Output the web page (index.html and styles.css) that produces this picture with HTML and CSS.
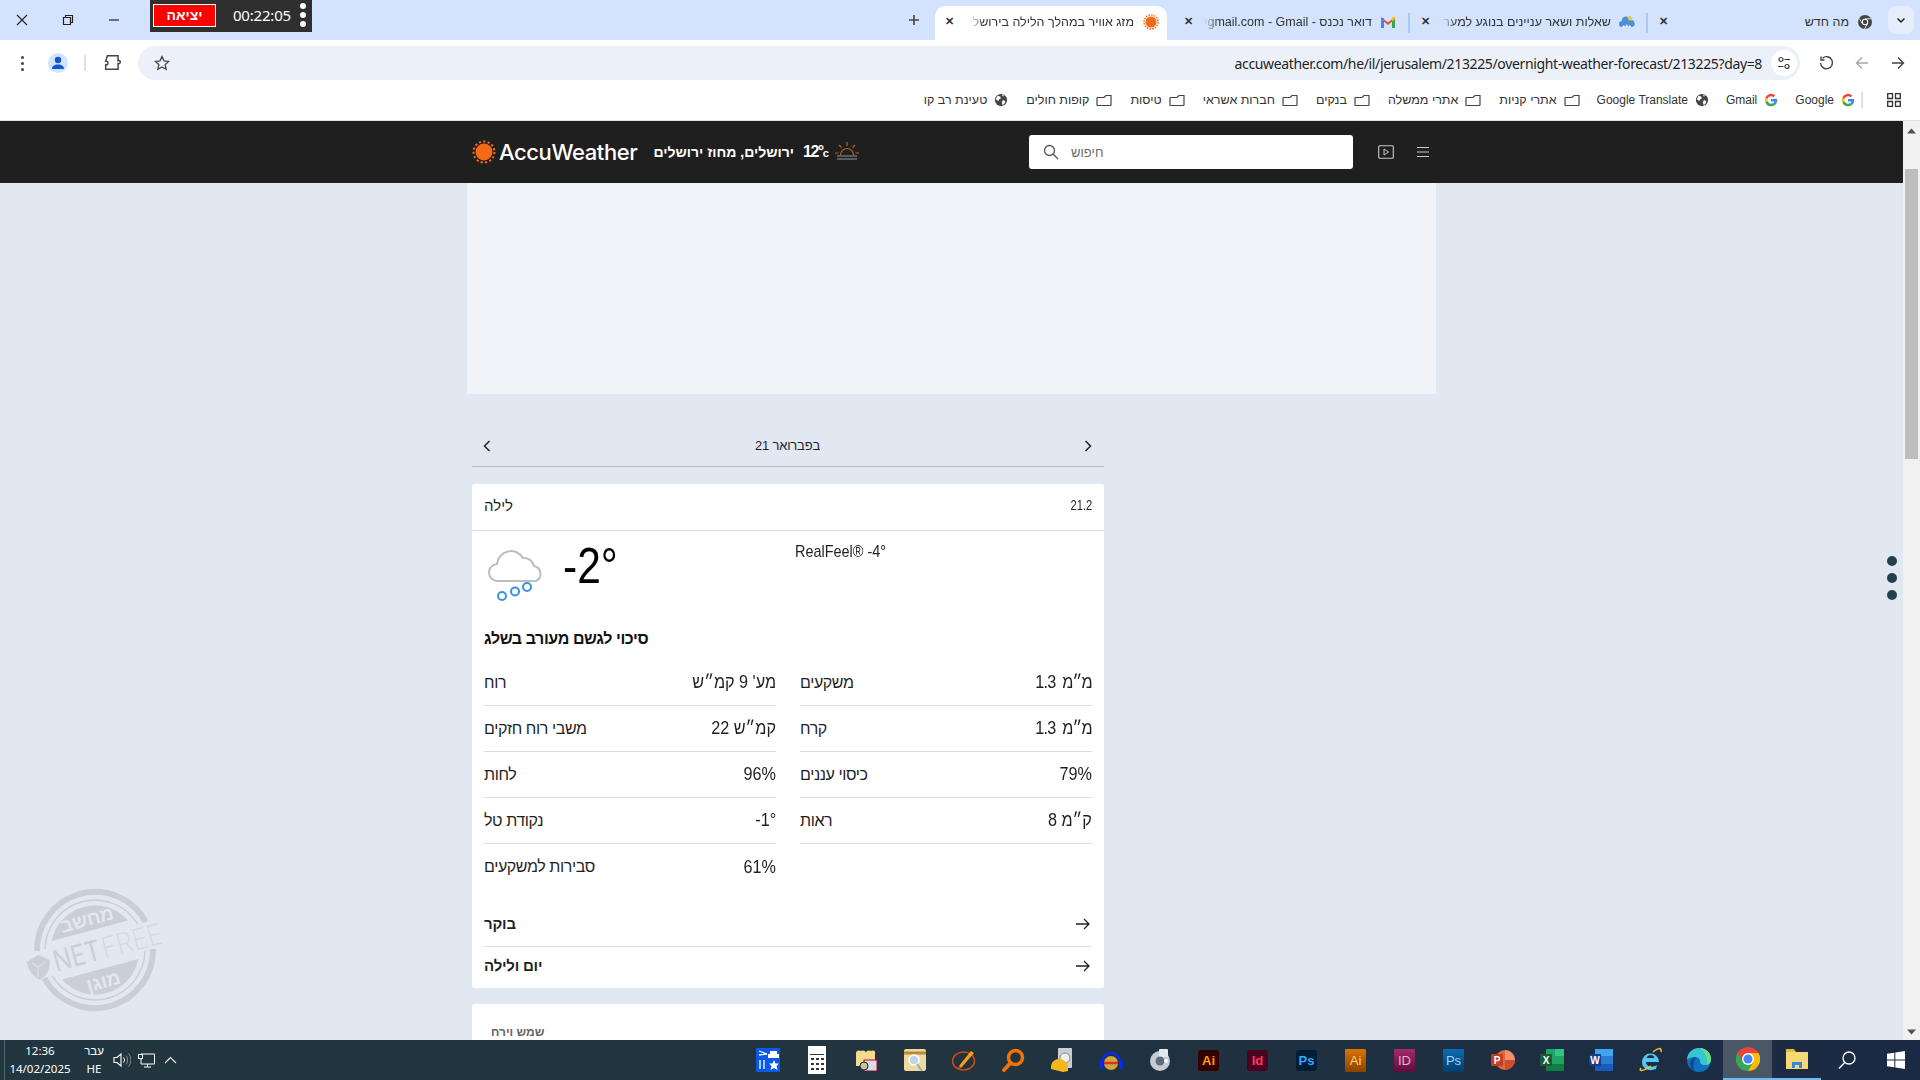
FILE: index.html
```html
<!DOCTYPE html>
<html lang="he">
<head>
<meta charset="utf-8">
<title>מזג אוויר במהלך הלילה בירושלים</title>
<link rel="stylesheet" href="styles.css">
</head>
<body>
<svg class="defs" width="0" height="0" aria-hidden="true">
  <symbol id="folder" viewBox="0 0 16 14"><path d="M1 2.500h5l2 2h6.500c.3 0 .5.2.5.5v7c0 .3-.2.5-.5.5h-13c-.3 0-.5-.2-.5-.5z" transform="matrix(-1 0 0 1 16 0)" fill="none" stroke="#444" stroke-width="1.200"/></symbol>
  <symbol id="globe" viewBox="0 0 16 16"><circle cx="8" cy="8" r="7" fill="#444"/><path d="M4 3l3 1 1 2-2 1-1 2-3-2zM10 8l3 1-1 3-2 2-1-3zM9 2l3 1-2 1z" fill="#fff"/></symbol>
  <symbol id="gg" viewBox="0 0 16 16"><path d="M15 8.200c0-.5 0-1-.1-1.400H8v2.800h4a3.400 3.400 0 0 1-1.500 2.200l2.300 1.800C14.200 12.300 15 10.400 15 8.200z" fill="#4285f4"/><path d="M8 15c1.900 0 3.500-.6 4.800-1.700l-2.300-1.800c-.6.400-1.500.7-2.500.7-1.900 0-3.500-1.300-4-3L1.600 11A7 7 0 0 0 8 15z" fill="#34a853"/><path d="M4 9.200a4.200 4.200 0 0 1 0-2.400L1.600 5a7 7 0 0 0 0 6.300z" fill="#fbbc05"/><path d="M8 3.800c1.100 0 2 .4 2.800 1.100l2-2A7 7 0 0 0 1.600 5L4 6.800c.5-1.700 2.100-3 4-3z" fill="#ea4335"/></symbol>
</svg>

<div class="tabstrip">
  <div class="wincontrols">
    <svg class="winbtn" width="12" height="12" viewBox="0 0 12 12"><path d="M1 1l10 10M11 1L1 11" stroke="#222" stroke-width="1.100"/></svg>
    <svg class="winbtn" width="12" height="12" viewBox="0 0 12 12"><path d="M1.500 3.500h7v7h-7zM3.500 3.500v-2h7v7h-2" fill="none" stroke="#222" stroke-width="1.200"/></svg>
    <svg class="winbtn" width="12" height="12" viewBox="0 0 12 12"><path d="M1 6h10" stroke="#222" stroke-width="1.200"/></svg>
  </div>
  <div class="timer">
    <span class="exit">יציאה</span>
    <span class="clock">00:22:05</span>
    <span class="timerdots"><i></i><i></i><i></i></span>
  </div>
  <div class="tabs">
    <svg class="newtab" width="12" height="12" viewBox="0 0 12 12"><path d="M6 1v10M1 6h10" stroke="#444" stroke-width="1.600"/></svg>
    <div class="tab active">
      <span class="x">✕</span>
      <span class="title">מזג אוויר במהלך הלילה בירושלים</span>
      <svg width="16" height="16" viewBox="0 0 16 16"><circle cx="8" cy="8" r="5.500" fill="#f56a15"/><circle cx="8" cy="8" r="7" fill="none" stroke="#f56a15" stroke-width="1.600" stroke-dasharray="1.500 1.250"/></svg>
    </div>
    <div class="tab gmail">
      <span class="x">✕</span>
      <span class="title">דואר נכנס - Gmail &rlm;- &rlm;user@gmail.com</span>
      <svg width="16" height="14" viewBox="0 0 16 14"><path d="M1 13V2l7 5.500L15 2v11h-3V6.500L8 10 4 6.500V13z" fill="#ea4335"/><path d="M1 13V3h3v10z" fill="#4285f4"/><path d="M12 13V3h3v10z" fill="#34a853"/><path d="M12 3l3-1.500V4l-3 2.500z" fill="#fbbc05"/></svg>
    </div>
    <i class="tabsep"></i>
    <div class="tab questions">
      <span class="x">✕</span>
      <span class="title">שאלות ושאר עניינים בנוגע למערכת</span>
      <svg width="16" height="14" viewBox="0 0 16 14"><path d="M3 12a3 3 0 0 1 0-6 4 4 0 0 1 8-1 3.500 3.500 0 0 1 2 7z" fill="#4a90d9"/><path d="M3 12l2-2 1 2 2-3 1 3 2-2 1 2z" fill="#fff"/><path d="M11 0l1 2 2 .5-1.500 1.500.3 2-1.800-1-1.800 1 .3-2L8 2.500 10 2z" fill="#f4c542"/></svg>
    </div>
    <i class="tabsep"></i>
    <div class="tab whatsnew">
      <span class="x">✕</span>
      <span class="title">מה חדש</span>
      <svg width="16" height="16" viewBox="0 0 16 16"><circle cx="8" cy="8" r="7" fill="#444"/><circle cx="8" cy="8" r="3.200" fill="#fff"/><circle cx="8" cy="8" r="2.200" fill="#444"/><path d="M8 4.800h6M5.300 9.500L2.300 4.500M10.700 9.500L7.500 15" stroke="#fff" stroke-width=".8"/></svg>
    </div>
    <div class="tabmenu"><svg width="10" height="10" viewBox="0 0 10 10"><path d="M1.500 3.500L5 7l3.500-3.500" fill="none" stroke="#222" stroke-width="1.500"/></svg></div>
  </div>
</div>

<div class="toolbar">
  <div class="toolleft">
    <span class="kebab"><i></i><i></i><i></i></span>
    <span class="avatar"><svg width="14" height="14" viewBox="0 0 14 14"><circle cx="7" cy="4" r="3.200" fill="#0b57d0"/><path d="M1 13c0-3 2.500-4.500 6-4.500s6 1.500 6 4.500z" fill="#0b57d0"/></svg></span>
    <i class="vsep"></i>
    <svg class="puzzle" width="18" height="18" viewBox="0 0 16 16"><path d="M3 1.500h9.500v4.500c1.500-.5 2 .5 2 1.200s-.5 1.800-2 1.300v5H1.500v-4c1.500.5 2-.5 2-1.500S3 6 1.500 6.500z" fill="none" stroke="#444" stroke-width="1.300"/></svg>
  </div>
  <div class="omnibox">
    <svg class="star" width="16" height="16" viewBox="0 0 16 16"><path d="M8 1.500l2 4.300 4.700.6-3.500 3.200.9 4.700L8 12l-4.100 2.300.9-4.700L1.300 6.400 6 5.800z" fill="none" stroke="#444" stroke-width="1.300"/></svg>
    <span class="url">accuweather.com/he/il/jerusalem/213225/overnight-weather-forecast/213225?day=8</span>
    <span class="tune"><svg width="14" height="14" viewBox="0 0 14 14"><circle cx="4" cy="3.500" r="2" fill="none" stroke="#333" stroke-width="1.200"/><path d="M7.500 3.500H13M1 10.500h5.500" stroke="#333" stroke-width="1.200"/><circle cx="10" cy="10.500" r="2" fill="none" stroke="#333" stroke-width="1.200"/></svg></span>
  </div>
  <div class="nav">
    <svg width="16" height="16" viewBox="0 0 16 16"><path d="M4.500 3.200A6 6 0 1 1 2.500 8" fill="none" stroke="#444" stroke-width="1.400"/><path d="M3 1.500V5h3.500" fill="none" stroke="#444" stroke-width="1.400"/></svg>
    <svg width="16" height="16" viewBox="0 0 16 16"><path d="M14 8H2.500M8 2.500L2.500 8 8 13.500" fill="none" stroke="#a6a8ab" stroke-width="1.400"/></svg>
    <svg width="16" height="16" viewBox="0 0 16 16"><path d="M2 8h11.500M8 2.500L13.500 8 8 13.500" fill="none" stroke="#444" stroke-width="1.400"/></svg>
  </div>
</div>

<div class="bookmarks">
  <svg class="apps" width="14" height="14" viewBox="0 0 14 14"><path d="M.7.700h4.800v4.800H.7zM8.500.700h4.800v4.800H8.500zM.7 8.500h4.800v4.800H.7zM8.500 8.500h4.800v4.800H8.500z" fill="none" stroke="#333" stroke-width="1.300"/></svg>
  <i class="vsep bmsep"></i>
  <span class="bm"><svg width="14" height="14"><use href="#gg"/></svg>Google</span>
  <span class="bm"><svg width="14" height="14"><use href="#gg"/></svg>Gmail</span>
  <span class="bm"><svg width="14" height="14"><use href="#globe"/></svg>Google Translate</span>
  <span class="bm he"><svg width="16" height="14"><use href="#folder"/></svg>אתרי קניות</span>
  <span class="bm he"><svg width="16" height="14"><use href="#folder"/></svg>אתרי ממשלה</span>
  <span class="bm he"><svg width="16" height="14"><use href="#folder"/></svg>בנקים</span>
  <span class="bm he"><svg width="16" height="14"><use href="#folder"/></svg>חברות אשראי</span>
  <span class="bm he"><svg width="16" height="14"><use href="#folder"/></svg>טיסות</span>
  <span class="bm he"><svg width="16" height="14"><use href="#folder"/></svg>קופות חולים</span>
  <span class="bm he"><svg width="14" height="14"><use href="#globe"/></svg>טעינת רב קו</span>
</div>

<div class="viewport">
  <div class="page">
    <header class="sitehead">
      <div class="headinner">
        <svg class="logosun" width="24" height="24" viewBox="0 0 24 24"><circle cx="12" cy="12" r="8.500" fill="#f56a15"/><circle cx="12" cy="12" r="10.500" fill="none" stroke="#f56a15" stroke-width="2" stroke-dasharray="2.200 2.200"/></svg>
        <span class="brand">AccuWeather</span>
        <span class="city">ירושלים, מחוז ירושלים</span>
        <span class="headtemp">12°<small>c</small></span>
        <svg class="headicon" width="24" height="22" viewBox="0 0 24 22"><path d="M5.500 14a6.500 6.500 0 0 1 13 0" fill="none" stroke="#b8651b" stroke-width="1.200"/><path d="M12 1v4M4 4l2.500 2.500M20 4l-2.500 2.500M0 12h3.500M20.500 12H24" stroke="#b8651b" stroke-width="1.200"/><path d="M2 15h20M2 18h20" stroke="#999" stroke-width="1.200"/></svg>
        <div class="headright">
          <div class="search">
            <svg width="16" height="16" viewBox="0 0 16 16"><circle cx="6.500" cy="6.500" r="5" fill="none" stroke="#555" stroke-width="1.300"/><path d="M10.300 10.300L15 15" stroke="#555" stroke-width="1.300"/></svg>
            <span>חיפוש</span>
          </div>
          <svg class="play" width="16" height="16" viewBox="0 0 16 16"><rect x=".7" y="1.700" width="14.600" height="12.600" rx="1" fill="none" stroke="#ccc" stroke-width="1.100"/><path d="M6 5l4.500 3L6 11z" fill="none" stroke="#ccc"/></svg>
          <svg class="menu" width="14" height="12" viewBox="0 0 14 12"><path d="M1 1.500h12M1 6h12M1 10.500h12" stroke="#ccc" stroke-width="1.100"/></svg>
        </div>
      </div>
    </header>

    <div class="content">
      <div class="adslot"></div>
      <div class="column">
        <div class="datebar">
          <svg width="8" height="12" viewBox="0 0 8 12"><path d="M6.500 1L1.500 6l5 5" fill="none" stroke="#222" stroke-width="1.500"/></svg>
          <span>21 בפברואר</span>
          <svg width="8" height="12" viewBox="0 0 8 12"><path d="M1.500 1l5 5-5 5" fill="none" stroke="#222" stroke-width="1.500"/></svg>
        </div>

        <section class="card">
          <div class="cardhead"><span class="night">לילה</span><span class="shortdate">21.2</span></div>
          <div class="current">
            <svg class="wxicon" width="56" height="54" viewBox="0 0 56 54"><path d="M10 33a8.500 8.500 0 0 1-1-17 14 14 0 0 1 26-6 10 10 0 0 1 11 8 8 8 0 0 1 2 15 4 4 0 0 1-2 0z" fill="none" stroke="#bdbdbd" stroke-width="2"/><circle cx="14" cy="48" r="4" fill="none" stroke="#3a92de" stroke-width="2"/><circle cx="27" cy="43.500" r="4" fill="none" stroke="#3a92de" stroke-width="2"/><circle cx="39" cy="39" r="4" fill="none" stroke="#3a92de" stroke-width="2"/></svg>
            <span class="bigtemp">-2°</span>
            <span class="realfeel">RealFeel® -4°</span>
          </div>
          <div class="phrase">סיכוי לגשם מעורב בשלג</div>
          <div class="stats">
            <div class="stat"><span>רוח</span><b>מע' 9 קמ״ש</b></div>
            <div class="stat"><span>משקעים</span><b class="tight">1.3 מ״מ</b></div>
            <div class="stat"><span>משבי רוח חזקים</span><b>22 קמ״ש</b></div>
            <div class="stat"><span>קרח</span><b class="tight">1.3 מ״מ</b></div>
            <div class="stat"><span>לחות</span><b>96%</b></div>
            <div class="stat"><span>כיסוי עננים</span><b>79%</b></div>
            <div class="stat"><span>נקודת טל</span><b>-1°</b></div>
            <div class="stat"><span>ראות</span><b>8 ק״מ</b></div>
            <div class="stat last"><span>סבירות למשקעים</span><b>61%</b></div>
          </div>
          <div class="links">
            <div class="link"><strong>בוקר</strong><svg width="16" height="12" viewBox="0 0 16 12"><path d="M1 6h13M9 1l5 5-5 5" fill="none" stroke="#222" stroke-width="1.300"/></svg></div>
            <div class="link"><strong>יום ולילה</strong><svg width="16" height="12" viewBox="0 0 16 12"><path d="M1 6h13M9 1l5 5-5 5" fill="none" stroke="#222" stroke-width="1.300"/></svg></div>
          </div>
        </section>

        <section class="card suncard"><span>שמש וירח</span></section>
      </div>
    </div>

    <div class="sidedots"><i></i><i></i><i></i></div>

    <div class="watermark">
      <svg width="160" height="140" viewBox="0 0 160 140">
        <g transform="translate(75 70) rotate(-15)">
          <path d="M-56.300 -14A58 58 0 0 1 56.300 -14M56.300 14A58 58 0 0 1 -56.300 14" fill="none" stroke="#cbced7" stroke-width="6"/>
          <path d="M-48 -14A50 50 0 0 1 48 -14M48 14A50 50 0 0 1 -48 14" fill="none" stroke="#cbced7" stroke-width="1.500"/>
          <path d="M-39.500 -20A44 44 0 0 1 39.500 -20zM39.500 20A44 44 0 0 1 -39.500 20z" fill="#cbced7"/>
          <text x="0" y="-25" class="wmheb" text-anchor="middle">מחשב</text>
          <text x="0" y="39" class="wmheb" text-anchor="middle">מוגן</text>
          <text x="-43" y="11" class="wmnet" textLength="48" lengthAdjust="spacingAndGlyphs">NET</text>
          <text x="7" y="11" class="wmfree" textLength="62" lengthAdjust="spacingAndGlyphs">FREE</text>
        </g>
        <path d="M7 82l11-7 12 5c0 9-3 16-10 20-6-3-12-9-13-18z" fill="#cbced7"/>
        <path d="M12 83l6 4 7-5M18 87v10" fill="none" stroke="#e2e8f1"/>
      </svg>
    </div>
  </div>
  <div class="scrollbar">
    <svg class="arrow" width="9" height="6" viewBox="0 0 9 6"><path d="M0 5.500L4.500.5 9 5.500z" fill="#505050"/></svg>
    <div class="thumb"></div>
    <svg class="arrow down" width="9" height="6" viewBox="0 0 9 6"><path d="M0 .5L4.500 5.500 9 .5z" fill="#505050"/></svg>
  </div>
</div>

<footer class="taskbar">
  <i class="showdesk"></i>
  <div class="dateclock"><span>12:36</span><span>14/02/2025</span></div>
  <div class="lang"><span>עבר</span><span>HE</span></div>
  <div class="tray">
    <svg width="18" height="16" viewBox="0 0 18 16"><path d="M1 5.500h3l4-3.500v12l-4-3.500H1z" fill="none" stroke="#fff" stroke-width="1.100"/><path d="M10.500 5.500a3.500 3.500 0 0 1 0 5" fill="none" stroke="#fff"/><path d="M13 3.500a7 7 0 0 1 0 9M15.500 1.500a10 10 0 0 1 0 13" fill="none" stroke="#7f8b94"/></svg>
    <svg width="17" height="15" viewBox="0 0 17 15"><path d="M3 1h13.500v10H3zM9.500 11v3M6 14h7" fill="none" stroke="#fff"/><rect x=".5" y="1.500" width="4" height="4" fill="#22343f" stroke="#fff"/></svg>
    <svg class="caret" width="13" height="8" viewBox="0 0 13 8"><path d="M1 7l5.500-5.500L12 7" fill="none" stroke="#fff" stroke-width="1.100"/></svg>
  </div>
  <div class="apps-row">
    <span class="slot"><svg width="24" height="24" viewBox="0 0 24 24"><rect width="24" height="24" fill="#0a5ae8"/><path d="M3 3l8 3M3 7l8-1M4 12v9M8 12v9" stroke="#fff" stroke-width="1.300"/><path d="M14 3h7v3h2v4h-11V6h2z" fill="#fff"/><path d="M18 12l1.500 3.500h3.500L20.500 18l1 4-3.500-2-3.500 2 1-4-2.500-2.500h3.500z" fill="#fff"/></svg></span>
    <span class="slot"><svg width="18" height="28" viewBox="0 0 18 28"><rect width="18" height="28" fill="#fff"/><path d="M2 8h14v1H2z" fill="#2a3a44"/><path d="M3 12h3v2H3zM8 12h3v2H8zM13 12h3v2h-3zM3 17h3v2H3zM8 17h3v2H8zM13 17h3v2h-3zM3 22h3v2H3zM8 22h3v2H8zM13 22h3v2h-3z" fill="#2a3a44"/></svg></span>
    <span class="slot"><svg width="22" height="22" viewBox="0 0 22 22"><path d="M1 4c0-3 4-3 5-2 1-1 5-1 5 2v13H1zM11 4c0-3 4-3 5-2 1-1 5-1 4 2v9h-9z" fill="#f7d98f"/><rect x="9" y="11" width="13" height="11" fill="#d7dbe6" stroke="#c03"/><circle cx="9" cy="17" r="4" fill="#bfc7a0" stroke="#222"/></svg></span>
    <span class="slot"><svg width="24" height="24" viewBox="0 0 24 24"><rect x="1" y="1" width="22" height="22" rx="2" fill="#efd9a0"/><path d="M1 5h22" stroke="#b98a3c" stroke-width="3"/><circle cx="11" cy="12" r="5" fill="#bcd6e6" stroke="#fff" stroke-width="1.500"/><path d="M14 16l5 7" stroke="#8fb0b5" stroke-width="2"/></svg></span>
    <span class="slot"><svg width="24" height="24" viewBox="0 0 24 24"><ellipse cx="11.500" cy="13" rx="11" ry="9" fill="none" stroke="#d24a18" stroke-width="1.500"/><path d="M7 18L19 3l3 2L9 20z" fill="#f6a11d"/><path d="M6 21l1-3 2 2z" fill="#d24a18"/></svg></span>
    <span class="slot"><svg width="24" height="24" viewBox="0 0 24 24"><circle cx="14.500" cy="9.500" r="7" fill="none" stroke="#f07400" stroke-width="3.500"/><path d="M9.500 15L3 22" stroke="#f07400" stroke-width="4" stroke-linecap="round"/></svg></span>
    <span class="slot"><svg width="24" height="26" viewBox="0 0 24 26"><rect x="8" y="1" width="14" height="20" rx="1" fill="#c9ced3"/><circle cx="15" cy="11" r="5" fill="#eceff1" stroke="#888"/><path d="M1 20c0-5 4-8 8-8s9 3 9 8v4l-5 1-12-3z" fill="#f7b71d"/></svg></span>
    <span class="slot"><svg width="24" height="24" viewBox="0 0 24 24"><path d="M3 14a9 9 0 0 1 18 0" fill="none" stroke="#0a2ae8" stroke-width="2.500"/><rect x="0" y="12" width="4" height="9" rx="1.500" fill="#0a2ae8"/><rect x="20" y="12" width="4" height="9" rx="1.500" fill="#0a2ae8"/><ellipse cx="12" cy="15" rx="7" ry="7" fill="#d0a63c"/><path d="M5 15h14" stroke="#d8312a" stroke-width="2.500"/></svg></span>
    <span class="slot"><svg width="24" height="24" viewBox="0 0 24 24"><circle cx="12" cy="13" r="10" fill="#c5cbd0"/><rect x="11" y="1" width="9" height="8" rx="1" fill="#e4e8ea"/><circle cx="12" cy="13" r="4.500" fill="#5b6e80"/><circle cx="18" cy="13" r="2" fill="#fff"/></svg></span>
    <span class="slot"><span class="tile ai">Ai</span></span>
    <span class="slot"><span class="tile id">Id</span></span>
    <span class="slot"><span class="tile ps">Ps</span></span>
    <span class="slot"><span class="tile old oai">Ai</span></span>
    <span class="slot"><span class="tile old oid">ID</span></span>
    <span class="slot"><span class="tile old ops">Ps</span></span>
    <span class="slot"><svg width="24" height="24" viewBox="0 0 24 24"><circle cx="14" cy="12" r="10" fill="#e2663f"/><path d="M14 2a10 10 0 0 1 10 10H14z" fill="#f0916f"/><path d="M14 12h10a10 10 0 0 1-10 10z" fill="#c8502c"/><rect x="0" y="6" width="12" height="12" rx="1" fill="#c43e1c"/><text x="6" y="16" class="svgletter" text-anchor="middle">P</text></svg></span>
    <span class="slot"><svg width="24" height="24" viewBox="0 0 24 24"><rect x="6" y="1" width="18" height="22" rx="1" fill="#21a366"/><rect x="15" y="1" width="9" height="7" fill="#33c481"/><rect x="6" y="16" width="18" height="7" fill="#107c41"/><rect x="0" y="6" width="12" height="12" rx="1" fill="#185c37"/><text x="6" y="16" class="svgletter" text-anchor="middle">X</text></svg></span>
    <span class="slot"><svg width="24" height="24" viewBox="0 0 24 24"><rect x="6" y="1" width="18" height="22" rx="1" fill="#2b7cd3"/><rect x="6" y="1" width="18" height="7" fill="#41a5ee"/><rect x="6" y="16" width="18" height="7" fill="#185abd"/><rect x="0" y="6" width="12" height="12" rx="1" fill="#103f91"/><text x="6" y="16" class="svgletter" text-anchor="middle">W</text></svg></span>
    <span class="slot"><svg width="24" height="26" viewBox="0 0 24 26"><path d="M4 15a8.500 8.500 0 0 1 17 0H8c0 5 6 6 11 3l-1 4c-7 3-14 0-14-7z" fill="#55c7f2"/><path d="M8.500 11h8c-.5-4-7-4-8 0z" fill="#1e2d3e"/><path d="M3 21C0 25 6 24 13 19M15 5c5-4 9-5 8 0" fill="none" stroke="#f2c12e" stroke-width="1.500"/></svg></span>
    <span class="slot"><svg width="24" height="24" viewBox="0 0 24 24"><circle cx="12" cy="12" r="12" fill="#0f6fc0"/><path d="M0 11C1 4 6 0 12 0c7 0 12 5 12 11 0 4-3 6-6 6-4 0-5-2-5-4 0-3-3-4-5-4-4 0-7 2-8 2z" fill="#37c6d0"/><path d="M13 0c6 0 11 5 11 11 0 3-2 5-4 6 1-6-1-13-7-17z" fill="#6fdc7f"/><path d="M8 24c-4-3-6-8-4-12 1-2 3-3 5-3-3 4-3 11-1 15z" fill="#0a4d8c"/></svg></span>
    <span class="slot on"><svg width="24" height="24" viewBox="0 0 24 24"><circle cx="12" cy="12" r="12" fill="#ea4335"/><path d="M12 6h10.500A12 12 0 0 1 12 24l5-9z" fill="#fbbc05"/><path d="M1.500 6A12 12 0 0 0 12 24l5-9-10 0z" fill="#34a853"/><circle cx="12" cy="12" r="6" fill="#fff"/><circle cx="12" cy="12" r="4.500" fill="#4285f4"/></svg></span>
    <span class="slot open"><svg width="24" height="22" viewBox="0 0 24 22"><path d="M1 1h8l2 3h-10z" fill="#e6b93f"/><rect x="1" y="4" width="22" height="17" fill="#f8d775"/><path d="M7 20v-6h10v6h-3v-3h-4v3z" fill="#2f88d8"/></svg></span>
    <span class="slot wide"><svg width="20" height="20" viewBox="0 0 20 20"><circle cx="12" cy="8" r="6" fill="none" stroke="#fff" stroke-width="1.300"/><path d="M7.700 12.500L2 18.500" stroke="#fff" stroke-width="1.300"/></svg></span>
    <span class="slot start"><svg width="18" height="18" viewBox="0 0 18 18"><path d="M0 2.800L7.300 1.700v6.800H0zM8.300 1.600L18 0v8.500H8.300zM0 9.500h7.300v6.800L0 15.200zM8.300 9.500H18V18L8.300 16.400z" fill="#fff"/></svg></span>
  </div>
</footer>
</body>
</html>
```

FILE: styles.css
```css
* { box-sizing: border-box; }
html, body { margin: 0; height: 100%; overflow: hidden; }
body {
  width: 1920px;
  height: 1080px;
  display: flex;
  flex-direction: column;
  font-family: "Liberation Sans", "Noto Sans", sans-serif;
  color: #1f1f1f;
  background: #fff;
}
i { display: block; font-style: normal; }
.defs { position: absolute; }

/* tab strip */
.tabstrip {
  height: 40px;
  flex: none;
  background: #d3e3fd;
  display: flex;
  align-items: flex-start;
}
.wincontrols { display: flex; width: 150px; padding: 14px 0 0 16px; gap: 34px; }
.timer {
  width: 162px;
  height: 32px;
  background: #2f2f2f;
  display: flex;
  align-items: center;
  padding: 0 6px 2px 3px;
}
.exit {
  width: 64px;
  height: 23px;
  background: #fe0000;
  border: 1px solid #fff;
  color: #fff;
  font-weight: 700;
  font-size: 14px;
  display: flex;
  align-items: center;
  justify-content: center;
}
.clock { color: #fff; font-size: 15px; margin-left: 17px; width: 59px; white-space: nowrap; font-family: "Noto Sans", sans-serif; letter-spacing: -.2px; }
.timerdots { display: flex; flex-direction: column; gap: 3px; margin-left: 9px; }
.timerdots i { width: 6px; height: 6px; border-radius: 50%; background: #fff; }
.tabs { flex: 1; display: flex; align-items: flex-end; height: 40px; direction: ltr; padding-left: 596px; }
.newtab { margin: 0 15px 14px 0; flex: none; }
.tab { height: 34px; display: flex; align-items: center; font-size: 12.500px; color: #333; flex: none; padding-bottom: 3px; }
.tab .title {
  flex: 1;
  min-width: 0;
  overflow: hidden;
  white-space: nowrap;
  direction: rtl;
  text-align: right;
  margin: 0 8px 0 7px;
  -webkit-mask-image: linear-gradient(90deg, transparent, #000 14px);
  mask-image: linear-gradient(90deg, transparent, #000 14px);
}
.tab .x { font-size: 11px; font-weight: 700; color: #333; width: 16px; text-align: center; flex: none; }
.tab svg { flex: none; }
.tab.active { width: 232px; background: #fff; border-radius: 10px 10px 0 0; padding: 0 8px 3px 6px; }
.tab.active .title { margin: 0 9px 0 13px; }
.tab.gmail { width: 241px; padding: 0 12px 3px 13px; }
.tab.gmail .title { margin-left: 8px; }
.tab.questions { width: 236px; padding: 0 11px 3px 7px; }
.tab.questions .title { margin-left: 9px; }
.tab.whatsnew { width: 233px; padding: 0 8px 3px 7px; }
.tab.whatsnew .title { margin: 0 8px 0 9px; -webkit-mask-image: none; mask-image: none; }
.tabsep { width: 2px; height: 20px; background: #a8c7fa; margin-bottom: 7px; flex: none; }
.tabmenu { width: 26px; height: 28px; border-radius: 8px; background: #e6eefb; margin: 0 0 6px 7px; display: flex; align-items: center; justify-content: center; flex: none; }

/* toolbar */
.toolbar {
  height: 40px;
  flex: none;
  background: #fff;
  border-radius: 8px 8px 0 0;
  display: flex;
  align-items: flex-end;
}
.toolleft { width: 138px; height: 40px; display: flex; align-items: center; padding: 6px 0 0 21px; flex: none; }
.kebab { display: flex; flex-direction: column; gap: 3px; width: 6px; }
.kebab i { width: 3px; height: 3px; border-radius: 50%; background: #444; }
.avatar { width: 20px; height: 20px; border-radius: 50%; background: #d3e3fd; display: flex; align-items: center; justify-content: center; margin-left: 21px; }
.vsep { width: 2px; height: 16px; background: #d3e3fd; }
.toolleft .vsep { margin-left: 16px; }
.puzzle { margin-left: 18px; }
.omnibox {
  width: 1662px;
  height: 34px;
  background: #ebf0f9;
  border-radius: 17px;
  display: flex;
  align-items: center;
  padding: 0 3px 0 16px;
  flex: none;
}
.url { margin-left: auto; font-size: 14px; color: #1f1f1f; white-space: nowrap; font-family: "Noto Sans", sans-serif; letter-spacing: -.36px; }
.tune { width: 26px; height: 26px; border-radius: 50%; background: #fff; display: flex; align-items: center; justify-content: center; margin-left: 9px; }
.nav { flex: 1; display: flex; height: 34px; align-items: center; padding-left: 18px; gap: 20px; }

/* bookmarks */
.bookmarks {
  height: 41px;
  flex: none;
  background: #fff;
  border-bottom: 1px solid #e0e0e0;
  direction: rtl;
  display: flex;
  align-items: center;
  padding: 0 19px 0 0;
  font-size: 12px;
  color: #333;
}
.apps { margin-left: 24px; flex: none; }
.bmsep { margin-left: 6px; }
.bm { display: flex; align-items: center; gap: 7px; margin-left: 17px; white-space: nowrap; }
.bm.he { font-size: 12.500px; margin-left: 18px; }

/* page */
.viewport { flex: 1; min-height: 0; display: flex; }
.page { flex: 1; background: #e2e8f1; overflow: hidden; position: relative; }
.sitehead { height: 62px; background: #1f1f1f; }
.headinner { width: 969px; height: 62px; margin: 0 auto; padding: 0 5px; display: flex; align-items: center; }
.brand { color: #fff; font-family: Inter, "Liberation Sans", sans-serif; font-size: 22px; font-weight: 500; margin-left: 3px; letter-spacing: -.4px; }
.city { color: #fff; font-weight: 700; font-size: 14px; margin-left: 16px; white-space: nowrap; }
.headtemp { color: #fff; font-size: 16px; font-weight: 700; margin-left: 9px; letter-spacing: -1.500px; }
.headtemp small { font-size: 11px; letter-spacing: 0; }
.headicon { margin-left: 6px; }
.headright { margin-left: auto; display: flex; align-items: center; }
.search { width: 324px; height: 34px; background: #fff; border-radius: 3px; display: flex; align-items: center; padding: 0 14px; gap: 12px; color: #6a6a6a; font-size: 13px; }
.play { margin-left: 25px; }
.menu { margin-left: 22px; margin-right: 1px; }

.content { width: 969px; margin: 0 auto; }
.adslot { height: 211px; background: #f0f3f8; }
.column { width: 632px; margin-left: 5px; }
.datebar { height: 73px; padding: 44px 12px 0 11px; border-bottom: 1px solid #bdbdbd; display: flex; justify-content: space-between; align-items: flex-start; font-size: 13px; line-height: 16px; letter-spacing: -.2px; }
.datebar svg { margin-top: 2px; }
.card { background: #fff; margin-top: 17px; border-radius: 2px; }
.cardhead { height: 47px; border-bottom: 1px solid #ddd; padding: 0 12px 4px; display: flex; justify-content: space-between; align-items: center; }
.night { font-size: 15px; }
.shortdate { font-size: 14px; display: inline-block; transform: scaleX(.8); transform-origin: right center; }
.current { height: 73px; padding: 17px 0 0 16px; display: flex; align-items: flex-start; }
.wxicon { flex: none; }
.bigtemp { font-size: 50px; line-height: 46px; margin: -5px 0 0 19px; width: 232px; flex: none; color: #000; display: inline-block; transform: scaleX(.85); transform-origin: left center; }
.realfeel { font-size: 17px; line-height: 20px; margin-top: -6px; white-space: nowrap; display: inline-block; transform: scaleX(.85); transform-origin: left center; }
.phrase { padding: 25px 12px 0; font-size: 16px; font-weight: 700; line-height: 20px; height: 56px; color: #111; letter-spacing: -.4px; }
.stats { display: grid; grid-template-columns: 292px 292px; column-gap: 24px; padding: 0 12px; }
.stat { height: 46px; border-bottom: 1px solid #ddd; display: flex; justify-content: space-between; align-items: center; font-size: 16px; letter-spacing: -.4px; }
.stat b { font-weight: 400; font-size: 18px; display: inline-block; transform: scaleX(.9); transform-origin: right center; letter-spacing: 0; white-space: nowrap; }
.stat b.tight { letter-spacing: -.8px; word-spacing: 3px; }
.stat.last { border-bottom: 0; }
.links { padding: 12px 13px 0 12px; }
.link { height: 44px; display: flex; justify-content: space-between; align-items: center; font-size: 15px; padding-bottom: 1px; letter-spacing: -.2px; }
.link + .link { height: 42px; border-top: 1px solid #ddd; padding-bottom: 4px; }
.link strong { font-weight: 700; }
.suncard { height: 60px; margin-top: 16px; padding: 21px 19px 0; font-size: 12px; font-weight: 700; color: #666; }

.sidedots { position: absolute; right: 6px; top: 435px; display: flex; flex-direction: column; gap: 7px; }
.sidedots i { width: 10px; height: 10px; border-radius: 50%; background: #23404f; }
.watermark { position: absolute; left: 20px; top: 759px; }
.wmheb { font-family: "Liberation Sans", sans-serif; font-weight: 700; font-size: 19px; fill: #e2e8f1; }
.wmnet { font-family: Inter, "Liberation Sans", sans-serif; font-weight: 400; font-size: 29px; fill: #cbced7; }
.wmfree { font-family: Inter, "Liberation Sans", sans-serif; font-weight: 200; font-size: 29px; fill: #d3d7e0; }

.scrollbar { width: 17px; background: #f1f1f1; display: flex; flex-direction: column; align-items: center; padding-top: 7px; }
.thumb { width: 13px; height: 290px; background: #bdbdbd; margin-top: 35px; }
.arrow.down { margin-top: auto; margin-bottom: 5px; }

/* taskbar */
.taskbar {
  height: 40px;
  flex: none;
  background: linear-gradient(90deg, #22363f 0%, #21343f 50%, #1b2a44 100%);
  display: flex;
  align-items: center;
  color: #fff;
  font-size: 11.500px;
  font-family: "Noto Sans", "Liberation Sans", sans-serif;
}
.showdesk { width: 1px; height: 40px; background: #56666f; margin-left: 4px; flex: none; }
.dateclock { display: flex; flex-direction: column; align-items: center; width: 66px; margin-left: 2px; line-height: 18px; }
.lang { display: flex; flex-direction: column; align-items: center; width: 32px; margin-left: 5px; line-height: 18px; }
.tray { display: flex; align-items: center; gap: 7px; margin-left: 3px; }
.caret { margin-left: 2px; }
.apps-row { margin-left: auto; display: flex; height: 40px; }
.slot { width: 49px; height: 40px; display: flex; align-items: center; justify-content: center; flex: none; }
.slot.wide { width: 51px; }
.slot.start { width: 48px; }
.slot.on { background: #4a5766; border-bottom: 2px solid #76b9ed; }
.slot.open { border-bottom: 2px solid #76b9ed; }
.tile { width: 21px; height: 21px; border-radius: 3px; display: flex; align-items: center; justify-content: center; font-weight: 700; font-size: 13px; font-family: "Liberation Sans", sans-serif; }
.tile.ai { background: #300; color: #f90; }
.tile.id { background: #49021f; color: #f36; }
.tile.ps { background: #001e36; color: #31a8ff; }
.tile.old { font-weight: 400; width: 21px; height: 23px; border-radius: 1px; }
.tile.oai { background: linear-gradient(180deg, #d97400, #8a4200); color: #ffd27a; }
.tile.oid { background: linear-gradient(180deg, #a52a6e, #5c0e3a); color: #f5a8d2; }
.tile.ops { background: linear-gradient(180deg, #0a6db0, #053d6d); color: #9bd6ff; }
.svgletter { font-family: "Liberation Sans", sans-serif; font-size: 10px; font-weight: 700; fill: #fff; }
```
